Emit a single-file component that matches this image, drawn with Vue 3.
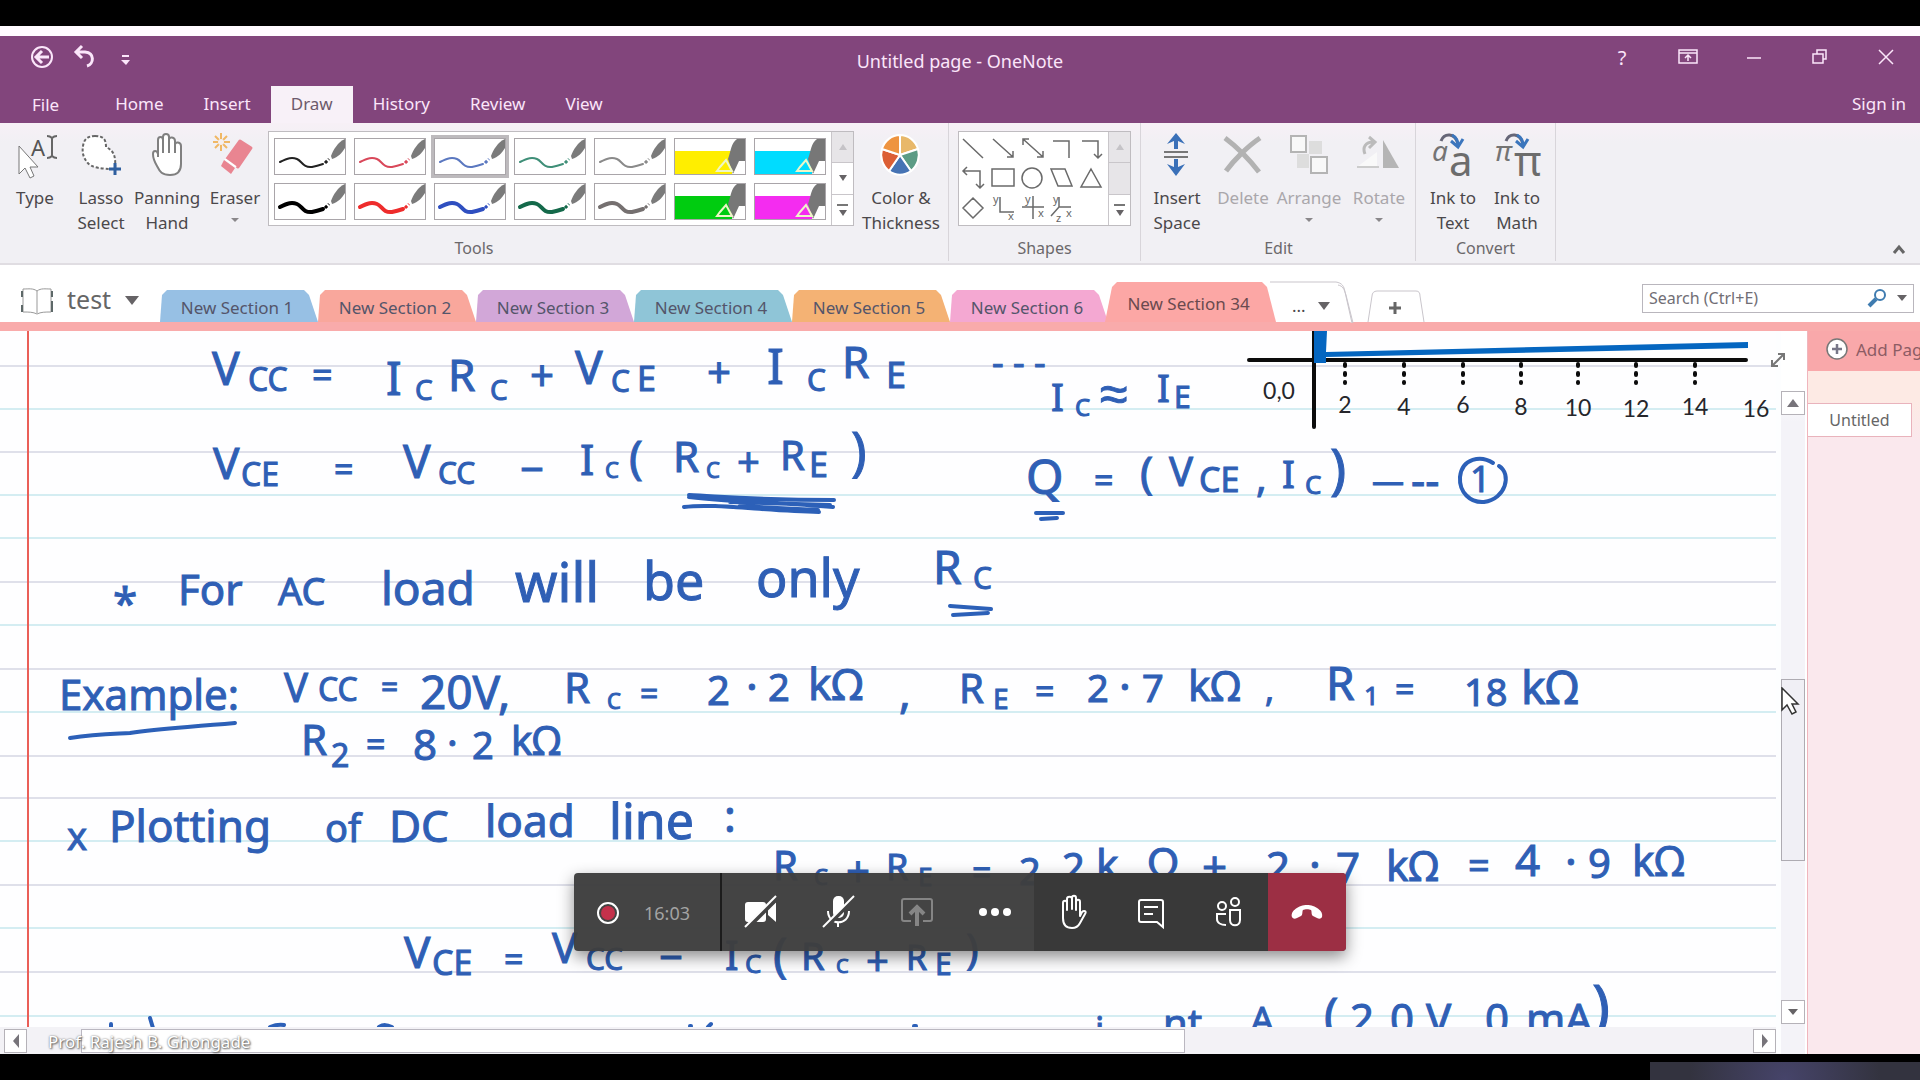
<script setup>
const menu = ['Home', 'Insert', 'Draw', 'History', 'Review', 'View']

const pens = [
  { c: '#222222', w: 2 }, { c: '#d9485a', w: 2 }, { c: '#5b78c0', w: 2, on: true }, { c: '#3f8f78', w: 2 }, { c: '#8a8a8a', w: 2 },
  { c: '#ffee00', hl: true }, { c: '#00dcff', hl: true },
  { c: '#000000', w: 4 }, { c: '#ee2c2c', w: 4 }, { c: '#2f4fc0', w: 4 }, { c: '#14694a', w: 4 }, { c: '#757070', w: 4 },
  { c: '#00cc10', hl: true }, { c: '#f42cf0', hl: true },
]

const sections = [
  { n: 'New Section 1', c: '#97c0e4' },
  { n: 'New Section 2', c: '#f9a79c' },
  { n: 'New Section 3', c: '#d2a7d8' },
  { n: 'New Section 4', c: '#8fc5d7' },
  { n: 'New Section 5', c: '#f4b274' },
  { n: 'New Section 6', c: '#f4a8d2' },
]

const rules = [
  [366, 0], [409, 1], [452, 0], [495, 1], [538, 1], [582, 0], [625, 1], [669, 0], [712, 1],
  [756, 0], [798, 0], [841, 1], [885, 0], [928, 1], [972, 0], [1016, 1],
]

/* ink words: x, baseline, size, text */
const ink = [
  [212, 385, 46, 'V'], [248, 391, 32, 'CC'], [312, 388, 36, '='],
  [386, 395, 46, 'I'], [415, 400, 28, 'C'], [448, 391, 44, 'R'], [490, 400, 28, 'C'], [530, 391, 42, '+'],
  [575, 384, 46, 'V'], [611, 392, 30, 'C'], [637, 391, 34, 'E'], [707, 388, 42, '+'],
  [767, 384, 50, 'I'], [807, 391, 30, 'C'], [842, 378, 44, 'R'], [886, 388, 36, 'E'], [992, 375, 36, '- - -'],
  [1051, 411, 38, 'I'], [1075, 416, 24, 'C'], [1100, 411, 50, '≈'], [1157, 402, 38, 'I'], [1174, 408, 30, 'E'],

  [213, 479, 44, 'V'], [241, 486, 32, 'CE'], [334, 482, 34, '='], [403, 478, 46, 'V'], [438, 484, 30, 'CC'], [520, 484, 42, '−'],
  [580, 475, 42, 'I'], [605, 478, 22, 'C'], [629, 474, 46, '('], [673, 472, 42, 'R'], [706, 478, 22, 'C'], [737, 476, 40, '+'],
  [780, 470, 40, 'R'], [809, 477, 34, 'E'], [851, 470, 52, ')'],
  [1026, 494, 48, 'Q'], [1094, 493, 34, '='], [1140, 488, 44, '('], [1169, 486, 40, 'V'], [1199, 492, 34, 'CE'], [1256, 492, 40, ','],
  [1282, 488, 38, 'I'], [1305, 494, 26, 'C'], [1330, 488, 54, ')'], [1372, 493, 32, '—'], [1411, 496, 44, '--'], [1470, 492, 36, '1'],

  [113, 619, 44, '*'], [178, 605, 42, 'For'], [278, 605, 38, 'AC'], [381, 605, 46, 'load'], [515, 602, 54, 'will'],
  [643, 600, 52, 'be'], [756, 597, 52, 'only'], [933, 584, 46, 'R'], [973, 589, 30, 'C'],

  [59, 710, 42, 'Example:'], [284, 702, 40, 'V'], [318, 701, 32, 'CC'], [381, 698, 30, '='], [420, 709, 46, '20V,'],
  [564, 703, 42, 'R'], [607, 709, 22, 'C'], [640, 705, 32, '='], [707, 705, 40, '2'], [746, 703, 44, '·'], [768, 701, 38, '2'],
  [808, 700, 44, 'kΩ'], [899, 708, 44, ','], [959, 703, 40, 'R'], [993, 709, 28, 'E'], [1035, 704, 34, '='], [1087, 702, 38, '2'],
  [1119, 703, 44, '·'], [1142, 702, 38, '7'], [1188, 701, 42, 'kΩ'], [1265, 702, 34, ','], [1326, 700, 46, 'R'], [1364, 705, 26, '1'],
  [1395, 702, 34, '='], [1464, 706, 38, '18'], [1521, 704, 46, 'kΩ'],

  [301, 755, 42, 'R'], [331, 767, 32, '2'], [366, 757, 34, '='], [413, 760, 42, '8'], [447, 757, 40, '·'], [472, 759, 38, '2'], [511, 755, 40, 'kΩ'],

  [67, 850, 38, 'x'], [109, 842, 44, 'Plotting'], [325, 842, 38, 'of'], [389, 842, 44, 'DC'], [485, 837, 44, 'load'], [609, 839, 50, 'line'], [724, 832, 44, ':'],

  [773, 880, 40, 'R'], [814, 885, 22, 'C'], [846, 887, 42, '+'], [886, 880, 36, 'R'], [918, 886, 26, 'E'], [972, 885, 34, '='],
  [1019, 885, 38, '2'], [1045, 882, 44, '.'], [1062, 882, 40, '2'], [1096, 880, 42, 'k'], [1148, 878, 42, 'Ω'], [1202, 883, 44, '+'],
  [1266, 882, 42, '2'], [1309, 881, 44, '·'], [1336, 883, 42, '7'], [1386, 881, 42, 'kΩ'], [1468, 879, 38, '='], [1515, 876, 44, '4'],
  [1565, 878, 44, '·'], [1588, 878, 40, '9'], [1632, 876, 42, 'kΩ'],

  [404, 968, 44, 'V'], [432, 975, 34, 'CE'], [504, 972, 34, '='], [552, 963, 42, 'V'], [586, 970, 30, 'CC'], [659, 972, 42, '−'],
  [725, 970, 40, 'I'], [745, 973, 26, 'C'], [773, 972, 48, '('], [801, 970, 38, 'R'], [836, 973, 20, 'C'], [866, 975, 40, '+'],
  [906, 970, 34, 'R'], [935, 975, 30, 'E'], [966, 964, 42, ')'],

  [1095, 1043, 36, 'i'], [1163, 1038, 40, 'nt'], [1250, 1034, 38, 'A'], [1324, 1032, 48, '('], [1350, 1034, 42, '2'], [1390, 1034, 42, '0'],
  [1426, 1034, 42, 'V'], [1485, 1034, 42, '0'], [1526, 1034, 42, 'mA'], [1592, 1028, 60, ')'],
]

const ticks = [
  [1345, 413, 2], [1404, 415, 4], [1463, 413, 6], [1521, 415, 8], [1578, 416, 10], [1636, 417, 12], [1695, 415, 14], [1756, 417, 16],
]
</script>

<template>
  <div class="screen">
    <div class="window">
      <header class="head">
        <div class="titlebar">
          <div class="quick">
            <button aria-label="Back">
              <svg width="26" height="26" viewBox="0 0 26 26"><circle cx="13" cy="13" r="10" /><path d="M20 13H8M13 7l-6 6 6 6" stroke-width="3" /></svg>
            </button>
            <button aria-label="Undo">
              <svg width="26" height="26" viewBox="0 0 26 26"><path d="M5 8h9c10 1 9 12 2 14M11 2L5 8l6 6" stroke-width="3" /></svg>
            </button>
            <button aria-label="Customize toolbar">
              <svg width="26" height="26" viewBox="0 0 26 26"><path d="M9 12h7" /><path d="M8 16h9l-4 5z" fill="#fbe6fa" stroke="none" /></svg>
            </button>
          </div>
          <h1>Untitled page - OneNote</h1>
          <div class="winctl">
            <button aria-label="Help" class="q">?</button>
            <button aria-label="Ribbon display"><svg width="22" height="22" viewBox="0 0 22 22"><path d="M2 4h18v13H2zM2 7h18M11 15V9M8 12l3-3 3 3" /></svg></button>
            <button aria-label="Minimize"><svg width="22" height="22" viewBox="0 0 22 22"><path d="M4 12h14" /></svg></button>
            <button aria-label="Restore"><svg width="22" height="22" viewBox="0 0 22 22"><path d="M4 8h10v9H4zM8 8V4h9v9h-3" /></svg></button>
            <button aria-label="Close"><svg width="22" height="22" viewBox="0 0 22 22"><path d="M4 4l14 14M18 4L4 18" /></svg></button>
          </div>
        </div>
        <nav class="menu">
          <button class="file">File</button>
          <button v-for="m in menu" :key="m" :class="{ on: m === 'Draw' }">{{ m }}</button>
          <a href="#" class="signin">Sign in</a>
        </nav>
      </header>

      <section class="ribbon">
        <div class="group tools">
          <div class="items">
            <button class="item w70">
              <svg width="44" height="44" viewBox="0 0 44 44"><path d="M6 14v28l6-6 5 10 4-2-4-9h8z" fill="#fff" stroke="#777" /><text x="18" y="24" class="a">A</text><path d="M34 4c3 0 4 1 5 2 1-1 2-2 5-2M39 6v18M34 26c3 0 4-1 5-2 1 1 2 2 5 2" fill="none" stroke="#666" stroke-width="2" /></svg>
              <span>Type</span>
            </button>
            <button class="item w62">
              <svg width="44" height="44" viewBox="0 0 44 44"><path d="M16 4c9 0 11 4 11 11 8 4 10 9 9 22-13 0-24-1-28-7C4 25 3 20 4 14 5 7 9 4 16 4z" fill="#fff" stroke="#666" stroke-width="2" stroke-dasharray="3 2" /><path d="M36 31v12M30 37h12" stroke="#2f5f9f" stroke-width="3" /></svg>
              <span>Lasso<br>Select</span>
            </button>
            <button class="item w70">
              <svg width="44" height="44" viewBox="0 0 44 44"><path d="M8 22c0-4 4-4 5 0V8c0-4 5-4 5 0V5c0-4 6-4 6 0v3c0-4 6-3 6 1v4c0-4 6-3 6 1v18c0 8-4 11-11 11-8 0-10-3-13-9-3-5-4-8-4-12zM13 20v5M18 8v13M24 7v14M30 9v12" fill="#fff" stroke="#808080" stroke-width="2" /></svg>
              <span>Panning<br>Hand</span>
            </button>
            <button class="item w66">
              <svg width="44" height="44" viewBox="0 0 44 44"><path d="M8 1v18M0 10h17M2 4l12 12M14 4L2 16" stroke="#f0b865" stroke-width="2" /><circle cx="8" cy="10" r="3" fill="#f5efef" /><path d="M27 9l11 7-13 19-11-8z" fill="#e98591" stroke="#e98591" stroke-width="3" stroke-linejoin="round" /><path d="M11 28l11 8-4 6-10-8z" fill="#e98591" /><path d="M12 27l11 8" stroke="#fff" stroke-width="2" /></svg>
              <span>Eraser</span><i class="dd"></i>
            </button>
            <div class="gallery">
              <div class="pens">
                <button v-for="(p, i) in pens" :key="i" class="pen" :class="{ on: p.on }" :aria-label="'Pen ' + (i + 1)">
                  <svg v-if="p.hl" width="70" height="35" viewBox="0 0 70 35"><rect y="12" width="57" height="23" :fill="p.c" /><path d="M70 0h-8c-6 4-6 12-9 20l5 15 12-12z" fill="#777" /><path d="M58 35l6-13h6v13z" fill="#fff" /><path d="M42 32l3-4 6-7 6 11z" :fill="p.c" stroke="#eef6c8" stroke-width="2" /></svg>
                  <svg v-else width="70" height="35" viewBox="0 0 70 35"><path d="M5 23c8-4 12-5 17-3s6 9 15 8c5-1 8-2 11-3" fill="none" :stroke="p.c" :stroke-width="p.w" stroke-linecap="round" /><path d="M50 24l4-4" :stroke="p.c" stroke-width="3" stroke-dasharray="3 2" /><path d="M70 0v9c-3 5-7 9-13 11l-1-3c2-6 7-14 14-17z" fill="#7b7b7b" /></svg>
                </button>
              </div>
              <div class="spin"><button class="off" aria-label="Up"><i class="up"></i></button><button aria-label="Down"><i class="dn"></i></button><button aria-label="More"><b></b><i class="dn"></i></button></div>
            </div>
            <button class="item w94">
              <svg width="44" height="44" viewBox="0 0 44 44"><g stroke="#fff" stroke-width="2"><path d="M21 23V3a19 20 0 0 1 18 14z" fill="#e8b86a" /><path d="M21 23l18-6a19 20 0 0 1-7 22z" fill="#5c9c85" /><path d="M21 23l11 16a19 20 0 0 1-22 0z" fill="#4673b4" /><path d="M21 23L10 39A19 20 0 0 1 3 17z" fill="#dc5f35" /><path d="M21 23L3 17A19 20 0 0 1 21 3z" fill="#ee9440" /></g></svg>
              <span>Color &amp;<br>Thickness</span>
            </button>
          </div>
          <h2>Tools</h2>
        </div>

        <div class="group shapes">
          <div class="items">
            <div class="gallery">
              <svg width="149" height="93" viewBox="0 0 149 93" fill="none" stroke="#6a6a6a" stroke-width="1.5">
                <path d="M4 7l20 19M34 7l20 18M54 19v6h-6M64 7l20 18M84 19v6h-6M64 13V7h6M94 9h16v17M123 9h16v17M135 22l4 4 4-4" />
                <path d="M4 39h17v17M17 52l4 4 4-4M8 35l-4 4 4 4M33 37h22v17H33zM92 37h14l7 17H99zM132 37l10 18h-20z" /><circle cx="73" cy="46" r="10" />
                <path d="M14 66l10 10-10 10-10-10zM41 65v15h14M63 75h22M74 64v23M100 65v10h12M100 75l-8 9" />
                <g class="axis" fill="#666" stroke="none"><text x="34" y="71">y</text><text x="49" y="88">x</text><text x="66" y="71">y</text><text x="79" y="85">x</text><text x="94" y="71">y</text><text x="107" y="85">x</text><text x="97" y="90">z</text></g>
              </svg>
              <div class="spin"><button class="off" aria-label="Up"><i class="up"></i></button><button class="off" aria-label="Down"></button><button aria-label="More"><b></b><i class="dn"></i></button></div>
            </div>
          </div>
          <h2>Shapes</h2>
        </div>

        <div class="group edit">
          <div class="items">
            <button class="item w70">
              <svg width="44" height="44" viewBox="0 0 44 44"><path d="M9 20h24M9 25h24" stroke="#777" stroke-width="2" /><path d="M21 1l9 11-7-3v8h-4V9l-7 3zM21 44l9-12-7 3v-8h-4v8l-7-3z" fill="#3a70b8" /></svg>
              <span>Insert<br>Space</span>
            </button>
            <button class="item w62 dim">
              <svg width="44" height="44" viewBox="0 0 44 44"><path d="M4 6c12 9 24 21 34 34M39 6C27 14 13 28 5 39" stroke="#b2b2b2" stroke-width="5" fill="none" /></svg>
              <span>Delete</span>
            </button>
            <button class="item w70 dim">
              <svg width="44" height="44" viewBox="0 0 44 44"><path d="M22 9h13v13H22zM10 22h12v14H10z" fill="#ddd" /><path d="M4 4h15v16H4zM24 25h16v16H24z" fill="#f8f8f8" stroke="#b4b4b4" stroke-width="2" /></svg>
              <span>Arrange</span><i class="dd"></i>
            </button>
            <button class="item w70 dim">
              <svg width="44" height="44" viewBox="0 0 44 44"><path d="M0 35L20 20v15z" fill="#f9f9f9" /><path d="M0 35h22" stroke="#ccc" stroke-width="2" /><path d="M26 8l16 28H26z" fill="#b5b5b5" /><path d="M8 22c-3-7 1-12 8-12M12 5l6 5-6 6" fill="none" stroke="#bbb" stroke-width="3" /></svg>
              <span>Rotate</span><i class="dd"></i>
            </button>
          </div>
          <h2>Edit</h2>
        </div>

        <div class="group convert">
          <div class="items">
            <button class="item w62">
              <svg width="44" height="46" viewBox="0 0 44 46"><text x="1" y="30" class="it">a</text><text x="18" y="45" class="big">a</text><path d="M10 10c3-8 14-9 17 3" fill="none" stroke="#667" stroke-width="3" /><path d="M21 4c4 2 6 5 6 11M20 10l7 6 5-8" fill="none" stroke="#3b76bd" stroke-width="3" /></svg>
              <span>Ink to<br>Text</span>
            </button>
            <button class="item w62">
              <svg width="46" height="46" viewBox="0 0 46 46"><text x="1" y="30" class="it">π</text><text x="20" y="45" class="big">π</text><path d="M12 10c3-8 14-9 17 3" fill="none" stroke="#667" stroke-width="3" /><path d="M23 4c4 2 6 5 6 11M22 10l7 6 5-8" fill="none" stroke="#3b76bd" stroke-width="3" /></svg>
              <span>Ink to<br>Math</span>
            </button>
          </div>
          <h2>Convert</h2>
        </div>
        <button class="collapse" aria-label="Collapse ribbon"><svg width="14" height="10" viewBox="0 0 14 10"><path d="M2 9l5-6 5 6" fill="none" stroke="#666" stroke-width="3" /></svg></button>
      </section>

      <nav class="sections">
        <button class="book">
          <svg width="34" height="28" viewBox="0 0 34 28"><path d="M17 4v22M17 4c-4-3-8-2-14-2v23c6 0 10 0 14 2 4-2 8-2 14-2V2c-6 0-10-1-14 2z" fill="none" stroke="#999" /><path d="M2 4v6M2 18v7M32 4v6M32 14v11" stroke="#5d6868" stroke-width="2" /></svg>
          <span>test</span><i class="dn"></i>
        </button>
        <button v-for="s in sections" :key="s.n" class="tab" :style="{ background: s.c }">{{ s.n }}</button>
        <button class="tab active">New Section 34</button>
        <button class="more" aria-label="More sections">
          <svg width="84" height="42" viewBox="0 0 84 42"><path d="M0 1h66c6 1 8 4 9 10l7 31M68 4c5 1 6 4 8 10l7 28" fill="#fff" stroke="#c9c5cb" /></svg>
          <span>...</span><i class="dn"></i>
        </button>
        <button class="add" aria-label="New section">
          <svg width="58" height="32" viewBox="0 0 58 32"><path d="M1 32l4-26c0-3 2-5 5-5h39c3 0 4 2 4 5l4 26" fill="#fff" stroke="#c9c5cb" /><path d="M28 12v12M22 18h12" stroke="#666" stroke-width="3" /></svg>
        </button>
        <div class="search">
          <input type="text" aria-label="Search" placeholder="Search (Ctrl+E)">
          <svg width="22" height="22" viewBox="0 0 22 22"><circle cx="13" cy="8" r="5" fill="none" stroke="#3f7cb0" stroke-width="2" /><path d="M9 12l-7 7" stroke="#3f7cb0" stroke-width="4" /></svg>
          <i class="dn"></i>
        </div>
      </nav>

      <main class="body">
        <div class="pane">
          <div class="note">
            <svg class="sheet" width="100%" height="100%">
              <g transform="translate(0 -331)">
                <line v-for="r in rules" :key="r[0]" x1="0" x2="1776" :y1="r[0]" :y2="r[0]" :stroke="r[1] ? '#d4edf2' : '#dfe0ea'" stroke-width="2" />
                <line x1="28" x2="28" y1="331" y2="1100" stroke="#ea5f58" stroke-width="2" />
                <g class="ink"><text v-for="(t, i) in ink" :key="i" :x="t[0]" :y="t[1]" :font-size="t[2]">{{ t[3] }}</text></g>
                <g class="strokes">
                  <path d="M689 495c40 2 70 5 145 5M689 497c50 6 90 5 144 10M684 507c30-4 80 4 135 5M730 502l100 3M740 506l78 4" />
                  <path d="M1036 513h27M1041 519l16-1M950 606l41 3M953 615l35-2" />
                  <path d="M70 738c25-4 40-4 60-5 30-5 50-5 105-10" />
                  <path d="M1493 463c-12-8-31-5-33 14-1 15 10 26 24 25 22-3 28-28 15-36" />
                  <path d="M111 1024v4M150 1018l3 10M270 1027c5-2 8-3 14-2M379 1027c5-3 8-2 13 0M690 1026h1M708 1027l3-3M914 1026h2" />
                </g>
                <g fill="none" stroke="#0c0c0c" stroke-width="4" stroke-linecap="round">
                  <path d="M1249 360h497M1314 331v96" />
                  <path v-for="t in ticks.slice(0, 7)" :key="t[0]" :d="`M${t[0]} 364v19`" stroke-dasharray="2 7" />
                </g>
                <path d="M1314 331h13l-1 21 422-10v6l-422 9v6h-12z" fill="#0566c0" />
                <g class="nums"><text x="1279" y="399">0,0</text><text v-for="t in ticks" :key="t[2]" :x="t[0]" :y="t[1]">{{ t[2] }}</text></g>
              </g>
            </svg>
          </div>
          <div class="hscroll">
            <button aria-label="Scroll left"><i class="lf"></i></button>
            <div class="htrack"><div class="hthumb"></div></div>
            <button aria-label="Scroll right"><i class="rt"></i></button>
          </div>
          <span class="presenter">Prof. Rajesh B. Ghongade</span>
        </div>
        <div class="vscroll">
          <svg class="expand" width="18" height="18" viewBox="0 0 18 18"><path d="M4 14L14 4M9 3h6v6M3 9v6h6" fill="none" stroke="#777" stroke-width="2" /></svg>
          <button aria-label="Scroll up"><i class="up"></i></button>
          <div class="vtrack">
            <div class="vthumb">
              <svg class="cursor" width="20" height="30" viewBox="0 0 20 30"><path d="M1 1v22l5-5 5 9 4-2-4-8h6z" fill="#fff" stroke="#333" stroke-width="1.5" /></svg>
            </div>
          </div>
          <button aria-label="Scroll down"><i class="dn"></i></button>
        </div>
        <aside class="pages">
          <button class="addpage"><svg width="24" height="24" viewBox="0 0 24 24"><circle cx="12" cy="12" r="10" fill="#fff" stroke="#777" stroke-width="1.5" /><path d="M12 7v10M7 12h10" stroke="#777788" stroke-width="2.5" /></svg>Add Page</button>
          <button class="page">Untitled</button>
        </aside>
      </main>
    </div>

    <div class="call">
      <div class="rec">
        <svg width="24" height="24" viewBox="0 0 24 24"><circle cx="12" cy="12" r="10" fill="none" stroke="#fff" stroke-width="2" /><circle cx="12" cy="12" r="7" fill="#c4314b" /></svg>
        <span>16:03</span>
      </div>
      <button aria-label="Turn camera on"><svg width="36" height="36" viewBox="0 0 36 36"><path d="M5 8h15a3 3 0 0 1 3 3v14a3 3 0 0 1-3 3H5a3 3 0 0 1-3-3V11a3 3 0 0 1 3-3zM25 15l8-7v20l-8-7z" fill="#fff" /><path d="M4 34L34 4" stroke="#444" stroke-width="5" /><path d="M2 33L33 2" stroke="#fff" stroke-width="2" /></svg></button>
      <button aria-label="Unmute"><svg width="36" height="36" viewBox="0 0 36 36"><rect x="12" y="2" width="11" height="22" rx="5" fill="#fff" /><path d="M7 17c0 15 21 15 21 0M17 28v5" fill="none" stroke="#fff" stroke-width="2" /><path d="M4 34L34 4" stroke="#444" stroke-width="4" /><path d="M2 33L33 2" stroke="#fff" stroke-width="2" /></svg></button>
      <button aria-label="Share"><svg width="36" height="36" viewBox="0 0 36 36" fill="none" stroke="#858585" stroke-width="2"><path d="M12 27H5a2 2 0 0 1-2-2V7a2 2 0 0 1 2-2h26a2 2 0 0 1 2 2v18a2 2 0 0 1-2 2h-7" /><path d="M18 32V14M11 20l7-7 7 7" stroke-width="4" /></svg></button>
      <button aria-label="More actions"><svg width="36" height="36" viewBox="0 0 36 36" fill="#fff"><circle cx="6" cy="18" r="4" /><circle cx="18" cy="18" r="4" /><circle cx="30" cy="18" r="4" /></svg></button>
      <button class="dark" aria-label="Raise hand"><svg width="36" height="36" viewBox="0 0 36 36"><path d="M8 20V9c0-3 4-3 4 0v7V5c0-3 5-3 5 0v10V4c0-3 4-3 4 0v12V8c0-3 4-3 4 0v14l2-4c2-2 5-1 3 2l-5 9c-2 4-4 5-8 5-6 0-9-4-9-10z" fill="none" stroke="#fff" stroke-width="2" stroke-linejoin="round" /></svg></button>
      <button class="dark" aria-label="Chat"><svg width="36" height="36" viewBox="0 0 36 36"><path d="M8 6h20a2 2 0 0 1 2 2v25l-6-5H8a2 2 0 0 1-2-2V8a2 2 0 0 1 2-2zM11 13h14M11 20h9" fill="none" stroke="#fff" stroke-width="2" /></svg></button>
      <button class="dark" aria-label="People"><svg width="36" height="36" viewBox="0 0 36 36" fill="none" stroke="#fff" stroke-width="2"><circle cx="11" cy="12" r="4" /><circle cx="24" cy="8" r="4" /><path d="M15 20H6v5c0 4 4 6 9 6M19 16h10v10c0 7-10 7-10 0z" /></svg></button>
      <button class="hang" aria-label="Hang up"><svg width="36" height="36" viewBox="0 0 36 36"><path d="M3 23c-2-6 7-12 15-12s17 6 15 12c-1 2-3 2-5 1l-4-2c-2-1-1-5-2-6-2-1-6-1-8 0-1 1 0 5-2 6l-4 2c-2 1-4 1-5-1z" fill="#fff" /></svg></button>
    </div>
    <div class="camera"></div>
  </div>
</template>

<style>
body { background: #000; }
</style>

<style scoped>
* { box-sizing: border-box; }
.screen { position: relative; min-height: 100vh; display: flex; flex-direction: column; padding: 26px 0; background: #000; overflow: hidden; font-family: "Noto Sans", sans-serif; font-size: 17px; color: #4b484b; }
button { border: 0; background: none; padding: 0; margin: 0; font: inherit; color: inherit; }
.window { flex: 1; display: flex; flex-direction: column; background: #fff; border-top: 10px solid #fffbff; }
.head { background: #82457c; color: #fbe6fa; }
.titlebar { display: grid; grid-template-columns: 1fr auto 1fr; height: 50px; }
.titlebar svg { fill: none; stroke: #fbe6fa; stroke-width: 2; display: block; }
.quick { display: flex; gap: 16px; padding: 8px 0 0 29px; align-items: flex-start; }
h1 { margin: 0; font-size: 18px; font-weight: 400; line-height: 24px; padding-top: 13px; }
.winctl { display: flex; justify-content: flex-end; padding-right: 1px; }
.winctl button { width: 66px; height: 42px; display: flex; align-items: center; justify-content: center; }
.winctl svg { stroke-width: 1.5; }
.winctl .q { font-size: 20px; }
.menu { display: flex; height: 37px; }
.menu button { padding: 0 20px 2px; }
.menu .file { padding: 0 36px 0 32px; }
.menu .on { background: #f8f1f8; color: #6d5a6b; }
.signin { margin-left: auto; padding-right: 14px; line-height: 35px; color: inherit; text-decoration: none; }

.ribbon { position: relative; display: flex; height: 142px; background: linear-gradient(#f7f0f6, #f1f0f4 20px); border-bottom: 2px solid #e0dde2; }
.group { border-right: 1px solid #d8d5da; margin-bottom: 2px; display: flex; flex-direction: column; padding-top: 8px; }
.items { display: flex; height: 108px; }
.group h2 { margin: 0; text-align: center; font-size: 16px; font-weight: 400; line-height: 26px; color: #6b686b; }
.shapes { width: 192px; padding-left: 9px; }
.shapes h2 { padding-right: 9px; }
.edit { width: 275px; padding-left: 1px; }
.convert { width: 140px; padding-left: 6px; }
.convert h2 { padding-right: 6px; }
.convert .items { gap: 2px; }
.item { display: flex; flex-direction: column; align-items: center; line-height: 25px; white-space: nowrap; }
.item svg { flex: none; height: 46px; margin-bottom: 8px; overflow: visible; }
.w62 { width: 62px; } .w66 { width: 66px; } .w70 { width: 70px; } .w94 { width: 94px; }
.dim { color: #aaa7ab; }
.a { font-size: 22px; fill: #555; }
.it { font: italic 28px "Noto Sans", sans-serif; fill: #747474; }
.big { font-size: 42px; fill: #6c6c6c; }
.axis { font-size: 11px; }
.dd { border: 4px solid transparent; border-top-color: #8a878a; border-bottom: 0; margin-top: 8px; }
.gallery { display: flex; height: 95px; border: 1px solid #bfbcc0; background: #fff; }
.pens { display: grid; grid-template-columns: repeat(7, 72px); gap: 8px; padding: 6px 5px; }
.pen { height: 37px; border: 1px solid #a9a5a9; overflow: hidden; }
.pen svg { display: block; }
.pen.on { outline: 3px solid #bdbabd; }
.spin { width: 22px; display: flex; flex-direction: column; border-left: 1px solid #c9c6ca; margin-left: auto; }
.spin button { flex: 1; display: flex; flex-direction: column; align-items: center; justify-content: center; gap: 4px; border-bottom: 1px solid #c9c6ca; }
.spin button:last-child { border-bottom: 0; }
.spin .off { background: #e7e5e8; }
.spin .off i { opacity: .3; }
.spin b { width: 11px; height: 2px; background: #777; }
.spin i { border-left-width: 4px; border-right-width: 4px; }
i { display: inline-block; width: 0; height: 0; }
.up { border: 5px solid transparent; border-bottom: 6px solid #77747a; border-top: 0; }
.dn { border: 5px solid transparent; border-top: 6px solid #666366; border-bottom: 0; }
.lf { border: 7px solid transparent; border-right: 6px solid #77747a; border-left: 0; }
.rt { border: 7px solid transparent; border-left: 6px solid #77747a; border-right: 0; }
.vscroll .up { border-width: 0 6px 8px; }
.collapse { position: absolute; right: 14px; bottom: 4px; }

.sections { display: flex; align-items: flex-end; height: 57px; }
.book { display: flex; align-items: center; width: 160px; padding: 0 0 3px 20px; height: 40px; font-size: 25px; color: #666; }
.book span { margin: 0 14px 4px 13px; }
.book .dn { border-width: 9px 7px 0; }
.tab { width: 158px; height: 32px; padding: 2px 4px 0 0; color: #54556a; clip-path: polygon(0 100%, 2px 5px, 7px 0, calc(100% - 14px) 0, calc(100% - 9px) 5px, 100% 100%); }
.tab.active { width: 171px; height: 40px; background: #fca7a5; color: #6a4a4f; margin-left: -3px; clip-path: polygon(0 100%, 7px 5px, 12px 0, calc(100% - 14px) 0, calc(100% - 9px) 5px, 100% 100%); }
.more { position: relative; width: 84px; height: 41px; display: flex; align-items: center; gap: 12px; padding: 8px 0 0 16px; }
.more svg { position: absolute; left: -6px; top: 0; }
.more span, .more i { position: relative; }
.more .dn { border-width: 8px 6px 0; }
.add { height: 32px; margin-left: 7px; }
.add svg { display: block; }
.search { display: flex; align-items: center; gap: 8px; width: 272px; height: 29px; margin: 0 6px 9px auto; padding: 0 6px 2px; border: 1px solid #b9b6bd; background: #fff; }
.search input { flex: 1; min-width: 0; border: 0; padding: 0; font: 16px "Noto Sans", sans-serif; outline: 0; background: none; }
.search input::placeholder { color: #716e75; opacity: 1; }

.body { flex: 1; display: flex; border-top: 9px solid #f9abab; min-height: 0; }
.pane { position: relative; flex: 1; min-width: 0; display: flex; flex-direction: column; padding-right: 5px; background: #fdfeff; }
.note { flex: 1; position: relative; overflow: hidden; background: #fefeff; }
.sheet { position: absolute; inset: 0; }
.ink { fill: #2f5fb5; stroke: #2f5fb5; stroke-width: 1px; }
.strokes { fill: none; stroke: #2c60b8; stroke-width: 4px; stroke-linecap: round; }
.nums { font: 23px Lato, sans-serif; fill: #26262b; text-anchor: middle; }
.hscroll { display: flex; height: 27px; padding: 2px 0 1px 4px; background: #f3f2f6; }
.hscroll button { width: 23px; border: 1px solid #b5b2b8; background: #fff; display: flex; align-items: center; justify-content: center; }
.htrack { flex: 1; padding-left: 54px; }
.hthumb { width: 66%; height: 100%; border: 1px solid #bab7c0; background: #fff; }
.presenter { position: absolute; left: 48px; bottom: 0; line-height: 24px; color: #fff; text-shadow: 1px 1px 2px #555, 0 0 2px #777; }
.vscroll { position: relative; width: 24px; padding: 60px 0 30px; display: flex; flex-direction: column; background: linear-gradient(#fff 60px, #f4f3f8 90px); }
.vscroll button { height: 24px; border: 1px solid #b5b2b8; background: #fff; display: flex; align-items: center; justify-content: center; }
.vtrack { flex: 1; padding-top: 264px; }
.vthumb { position: relative; height: 182px; border: 1px solid #aeabb2; background: #f0eff5; }
.cursor { position: absolute; left: -1px; top: 7px; }
.expand { position: absolute; left: -12px; top: 20px; }
.pages { width: 113px; margin-left: 2px; overflow: hidden; display: flex; flex-direction: column; align-items: flex-start; background: linear-gradient(#fdeae4 70px, #fae8ed 110px); border-left: 1px solid #f0b5bd; }
.addpage { display: flex; align-items: center; gap: 7px; height: 40px; width: 160px; padding: 0 0 4px 17px; background: #f9a8aa; color: #8d5c64; white-space: nowrap; }
.page { width: 104px; height: 34px; margin-top: 32px; background: #fff; border: 1px solid #e9b3bc; border-left: 0; color: #666; font-size: 16px; }

.call { position: absolute; left: 574px; top: 873px; height: 78px; display: flex; border-radius: 4px; overflow: hidden; background: rgba(62, 62, 62, .97); box-shadow: 0 6px 16px rgba(0, 0, 0, .45); }
.rec { width: 148px; display: flex; align-items: center; gap: 24px; padding: 2px 0 0 22px; border-right: 2px solid #1c1c1c; color: #a3a3a3; font-size: 18px; }
.call button { width: 78px; display: flex; align-items: center; justify-content: center; }
.call .dark { background: #393939; }
.call .hang { background: #9c2f44; }
.camera { position: absolute; right: 0; bottom: 0; width: 270px; height: 18px; background: radial-gradient(circle at 50% 100%, #46446a, #33333f 70%); }
</style>
